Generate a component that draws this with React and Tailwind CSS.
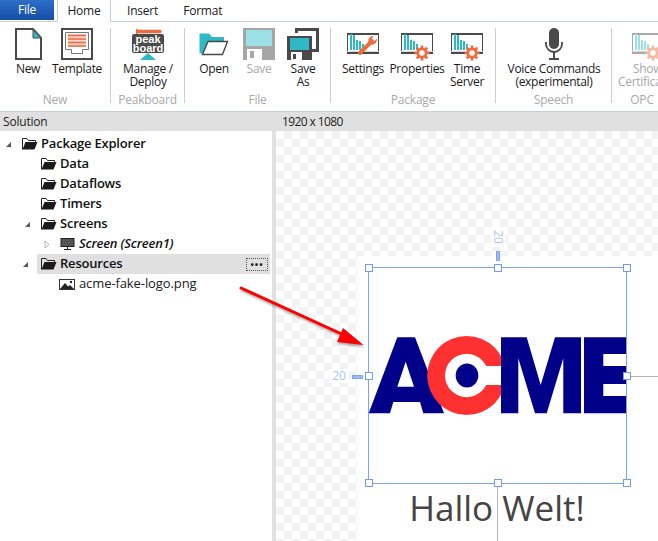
import { Fragment } from "react";

const D = "#4a4a4a";
const T = "#2fb9c4";
const O = "#ee6a3f";

function NewIcon() {
  return (
    <svg width="27" height="32" viewBox="0 0 27 32">
      <path d="M1 1H18L26 10V31H1Z" fill="#fff" stroke={D} strokeWidth="2" />
      <path d="M18 1.5L26 10H18Z" fill={T} stroke={D} strokeWidth="1" />
    </svg>
  );
}
function TemplateIcon() {
  return (
    <svg width="32" height="32" viewBox="0 0 32 32">
      <rect x="1" y="1" width="30" height="30" fill="#fff" stroke={D} strokeWidth="2" />
      <path d="M4.5 4.5H27.5V21.5H21.5V25.5H10.5V21.5H4.5Z" fill="#fff" stroke="#777" />
      <rect x="7" y="6" width="18" height="13" fill="#fcd9cc" />
      <path d="M7 7.5H25M7 11H25M7 14.5H25M7 18H25" stroke="#f0653c" strokeWidth="1.6" />
    </svg>
  );
}
function PeakboardIcon() {
  return (
    <svg width="32" height="32" viewBox="0 0 32 32">
      <path d="M6 3.5H28" stroke={O} strokeWidth="3.4" strokeLinecap="round" />
      <path d="M4 0.5L9 3.5L4 6.5Z" fill={O} />
      <rect x="0" y="6" width="32" height="19" rx="2" fill={D} />
      <text x="16" y="15" textAnchor="middle" fontSize="11" fontWeight="700" fill="#fff" fontFamily="'Liberation Sans',sans-serif">peak</text>
      <text x="16" y="23.5" textAnchor="middle" fontSize="11" fontWeight="700" fill="#fff" fontFamily="'Liberation Sans',sans-serif">board</text>
      <path d="M16 25L24 32H8Z" fill={T} />
    </svg>
  );
}
function OpenIcon() {
  return (
    <svg width="30" height="32" viewBox="0 0 30 32">
      <path d="M0.5 5.5V25.5H4L9 13H25V9H13L10 5.5Z" fill={T} />
      <path d="M9 13.5H28.5L23.5 26.5H3.5Z" fill="#fff" stroke={D} strokeWidth="1.4" />
    </svg>
  );
}
function SaveIcon() {
  return (
    <svg width="32" height="32" viewBox="0 0 32 32">
      <rect width="32" height="32" fill="#a6a6a6" />
      <rect x="3" y="2" width="26" height="16" fill="#9be1e7" />
      <rect x="4" y="21" width="15" height="11" fill="#fff" />
      <rect x="7" y="23" width="4" height="7" fill="#a6a6a6" />
    </svg>
  );
}
function SaveAsIcon() {
  return (
    <svg width="32" height="32" viewBox="0 0 32 32">
      <path d="M8 0H32V24H25V5H8Z" fill={D} />
      <path d="M11 3H29V21H25V5H11Z" fill="#fff" />
      <rect x="0" y="8" width="25" height="24" fill={D} />
      <rect x="3" y="10" width="19" height="12" fill={T} />
      <rect x="4" y="24" width="11" height="8" fill="#fff" />
      <rect x="6" y="26" width="3" height="5" fill={D} />
    </svg>
  );
}
function Gear({ x, y, color }) {
  const angles = [0, 45, 90, 135];
  return (
    <g>
      {angles.map((a) => (
        <path key={a} d={`M${x} ${y - 7.5}V${y + 7.5}`} stroke={color} strokeWidth="2.6" transform={`rotate(${a} ${x} ${y})`} />
      ))}
      <circle cx={x} cy={y} r="4.2" fill="#fff" stroke={color} strokeWidth="2.8" />
    </g>
  );
}
function Chart({ tool, dim }) {
  const bars = [[4, 16], [7, 15], [10, 10], [13, 9], [16, 6]];
  const frame = dim ? "#a9a9a9" : D;
  const teal = dim ? "#9be1e7" : T;
  const orange = dim ? "#f8b9a4" : O;
  return (
    <svg width="32" height="32" viewBox="0 0 32 32" className="overflow-visible">
      <rect x="0.5" y="5.5" width="31" height="20" fill="#fff" stroke={frame} />
      <path d="M0 6H32M0 25H32" stroke={frame} strokeWidth="2" />
      <path d="M0 23.5H32" stroke="#d8d8d8" />
      {bars.map(([x, h]) => (
        <path key={x} d={`M${x} 22V${22 - h}`} stroke={teal} strokeWidth="2" />
      ))}
      {tool ? (
        <g>
          <path d="M13 25L25 13" stroke={orange} strokeWidth="4" strokeLinecap="round" />
          <path d="M30 10.5A5.5 5.5 0 0 1 22 16A5.5 5.5 0 0 1 25 8L26.5 8L24.5 11L27 13.5Z" fill={orange} />
        </g>
      ) : (
        <Gear x={21} y={25} color={orange} />
      )}
    </svg>
  );
}
function MicIcon() {
  return (
    <svg width="18" height="32" viewBox="0 0 18 32">
      <rect x="4" y="0" width="10" height="21" rx="5" fill={D} />
      <path d="M1 14V16A8 8 0 0 0 17 16V14" fill="none" stroke={D} strokeWidth="1.8" />
      <path d="M9 24V31M4 31H14" stroke={D} strokeWidth="2" />
    </svg>
  );
}

function RibbonButton({ icon, lines, w, ml = "", dim }) {
  return (
    <div className={`flex flex-col items-center ${w} ${ml}`}>
      <div className="h-[34px] flex items-start justify-center">{icon}</div>
      <div className={`text-center leading-[13px] whitespace-nowrap tracking-[-0.3px] ${dim ? "text-[#a8a8a8]" : "text-[#1a1a1a]"}`}>
        {lines.map((l, i) => (
          <Fragment key={l}>
            {i > 0 && <br />}
            {l}
          </Fragment>
        ))}
      </div>
    </div>
  );
}
function Group({ label, w, children }) {
  return (
    <div className={`flex flex-col shrink-0 pt-[6px] ${w}`}>
      <div className="flex h-[64px]">{children}</div>
      <div className="text-center leading-[16px] text-[#a9a9a9] tracking-[-0.2px]">{label}</div>
    </div>
  );
}
function Sep() {
  return <div className="w-px h-[75px] mt-[6px] shrink-0 bg-[#c5d0de]" />;
}

function Folder() {
  return (
    <svg width="16" height="12" viewBox="0 0 16 12">
      <path d="M0.5 11.5V0.5H5L6.5 2.5H13.5V4" fill="none" stroke="#222" />
      <path d="M3.5 4H15.5L12.5 11.5H0.5Z" fill="#1a1a1a" />
    </svg>
  );
}
function Expanded() {
  return (
    <svg width="7" height="7" viewBox="0 0 7 7">
      <path d="M6 1V6H1Z" fill="#555" />
    </svg>
  );
}
function Collapsed() {
  return (
    <svg width="6" height="9" viewBox="0 0 6 9">
      <path d="M1 1L5 4.5L1 8Z" fill="#fff" stroke="#b5b5b5" />
    </svg>
  );
}
function Monitor() {
  return (
    <svg width="15" height="12" viewBox="0 0 15 12">
      <rect x="1" y="0.5" width="13" height="8" fill="#555" stroke="#222" />
      <path d="M7.5 9V11M4 11.5H11" stroke="#222" />
    </svg>
  );
}
function ImageIcon() {
  return (
    <svg width="16" height="11" viewBox="0 0 16 11">
      <rect x="0.5" y="0.5" width="15" height="10" fill="#fff" stroke="#333" />
      <path d="M1 10L6 4L9 7.5L11 6L15 10Z" fill="#222" />
      <circle cx="12" cy="3" r="1.2" fill="#222" />
    </svg>
  );
}

function TreeRow({ arrow, icon, label, arrowBox, iconBox, cls = "" }) {
  return (
    <div className="h-5 flex items-center">
      <div className={`flex items-center justify-center shrink-0 ${arrowBox}`}>{arrow}</div>
      <div className={`flex items-center shrink-0 ${iconBox}`}>{icon}</div>
      <span className={`text-[13px] whitespace-nowrap text-[#111] tracking-[-0.2px] ${cls}`}>{label}</span>
    </div>
  );
}

function Handle({ cls }) {
  return <div className={`absolute w-2 h-2 bg-white border border-[#6f9cf0] ${cls}`} />;
}

export default function App() {
  return (
    <div
      className="w-[658px] h-[541px] overflow-hidden bg-white flex flex-col text-xs text-[#1a1a1a]"
      style={{ fontFamily: "'Open Sans','Noto Sans',sans-serif" }}
    >
      {/* Tabs */}
      <div className="h-[22px] flex items-start border-b border-[#c5d0de] shrink-0 tracking-[-0.2px]">
        <div className="w-[54px] h-5 bg-gradient-to-b from-[#2e6fc9] to-[#154ea6] text-white flex items-center justify-center">File</div>
        <div className="ml-[3px] w-[54px] h-[22px] bg-white border-x border-[#c5d0de] flex items-center justify-center">Home</div>
        <div className="ml-[16px] h-[21px] flex items-center">Insert</div>
        <div className="ml-[25px] h-[21px] flex items-center">Format</div>
      </div>

      {/* Ribbon */}
      <div className="h-[89px] flex shrink-0 bg-white">
        <Group label="New" w="w-[110px]">
          <RibbonButton w="w-[38px]" ml="ml-[9px]" icon={<NewIcon />} lines={["New"]} />
          <RibbonButton w="w-[54px]" ml="ml-[3px]" icon={<TemplateIcon />} lines={["Template"]} />
        </Group>
        <Sep />
        <Group label="Peakboard" w="w-[73px]">
          <RibbonButton w="w-[73px]" ml="ml-[1px]" icon={<PeakboardIcon />} lines={["Manage /", "Deploy"]} />
        </Group>
        <Sep />
        <Group label="File" w="w-[145px]">
          <RibbonButton w="w-[44px]" ml="ml-[7px]" icon={<OpenIcon />} lines={["Open"]} />
          <RibbonButton w="w-[44px]" ml="ml-[1px]" dim icon={<SaveIcon />} lines={["Save"]} />
          <RibbonButton w="w-[42px]" ml="ml-[1px]" icon={<SaveAsIcon />} lines={["Save", "As"]} />
        </Group>
        <Sep />
        <Group label="Package" w="w-[164px]">
          <RibbonButton w="w-[52px]" ml="ml-[6px]" icon={<Chart tool />} lines={["Settings"]} />
          <RibbonButton w="w-[54px]" ml="ml-[1px]" icon={<Chart />} lines={["Properties"]} />
          <RibbonButton w="w-[44px]" ml="ml-[1px]" icon={<Chart />} lines={["Time", "Server"]} />
        </Group>
        <Sep />
        <Group label="Speech" w="w-[115px]">
          <RibbonButton w="w-[115px]" ml="ml-[1px]" icon={<MicIcon />} lines={["Voice Commands", "(experimental)"]} />
        </Group>
        <Sep />
        <Group label="OPC" w="w-[60px]">
          <RibbonButton w="w-[68px]" ml="ml-[6px]" dim icon={<Chart dim />} lines={["Show", "Certificates"]} />
        </Group>
      </div>

      {/* Panel headers */}
      <div className="h-5 flex items-center shrink-0 bg-[#e0e0e0] border-t border-[#c5d0de] text-[#222]">
        <div className="w-[282px] pl-[3px] tracking-[-0.2px]">Solution</div>
        <div className="tracking-[-0.6px]">1920 x 1080</div>
      </div>

      {/* Body */}
      <div className="flex-1 flex min-h-0">
        <div className="w-[272px] shrink-0 pt-[2px] pr-[2px] bg-white font-semibold">
          <div className="h-px" />
          <TreeRow arrow={<Expanded />} arrowBox="w-[17px]" iconBox="w-[19px] ml-[5px]" icon={<Folder />} label="Package Explorer" />
          <TreeRow arrowBox="w-[41px]" iconBox="w-[19px]" icon={<Folder />} label="Data" />
          <TreeRow arrowBox="w-[41px]" iconBox="w-[19px]" icon={<Folder />} label="Dataflows" />
          <TreeRow arrowBox="w-[41px]" iconBox="w-[19px]" icon={<Folder />} label="Timers" />
          <TreeRow arrow={<Expanded />} arrowBox="w-[41px] pl-[16px] pr-[3px]" iconBox="w-[19px]" icon={<Folder />} label="Screens" />
          <TreeRow arrow={<Collapsed />} arrowBox="w-[60px] pl-[36px] pr-[3px]" iconBox="w-[19px]" icon={<Monitor />} cls="italic" label="Screen (Screen1)" />
          <div className="h-5 flex items-center">
            <div className="w-[37px] shrink-0 flex justify-center pl-[14px]"><Expanded /></div>
            <div className="flex-1 h-5 flex items-center bg-[#e0e0e0]">
              <div className="w-[4px]" />
              <div className="w-[19px] flex items-center"><Folder /></div>
              <span className="text-[13px] text-[#111] tracking-[-0.2px]">Resources</span>
              <div className="ml-auto mr-[2px] w-[22px] h-[13px] border border-dotted border-[#555] flex items-center justify-center text-[9px] leading-none tracking-[1px] font-bold">•••</div>
            </div>
          </div>
          <div className="h-5 flex items-center">
            <div className="w-[59px] shrink-0" />
            <div className="w-[20px] flex items-center"><ImageIcon /></div>
            <span className="text-[13px] font-normal text-[#222] tracking-[-0.1px]">acme-fake-logo.png</span>
          </div>
        </div>
        <div className="w-1 shrink-0 bg-[#e0e0e0]" />

        {/* Free canvas */}
        <div className="relative flex-1 overflow-hidden bg-[repeating-conic-gradient(#f3f3f3_0_25%,#ffffff_0_50%)] bg-[size:16px_16px]">
          <div className="absolute left-[81px] top-[125px] right-0 bottom-0 bg-white" />
          <div className="absolute left-[221px] top-[352px] bottom-0 w-px bg-[#b5b5b5]" />
          <div className="absolute left-[351px] top-[245px] right-0 h-px bg-[#b5b5b5]" />

          <svg className="absolute left-[92px] top-[204px]" width="259" height="80" viewBox="368 335 259 80">
            <path d="M368.7 413.3L397.3 337.3H415L444 413.3H423.3L420 402H393.3L390 413.3ZM397.3 386.7H414L405.7 361.7Z" fill="#000088" fillRule="evenodd" />
            <circle cx="466.7" cy="375.5" r="39.5" fill="#ff3030" />
            <circle cx="466.7" cy="375.5" r="21.7" fill="#fff" />
            <rect x="467" y="366" width="36" height="19" fill="#fff" />
            <ellipse cx="467" cy="375.5" rx="11.3" ry="12" fill="#000088" />
            <path d="M501 337.3H526.7L540.7 385L555 337.3H581V413.3H563.3V358.3L546.7 413.3H535L518.3 358.3V413.3H501Z" fill="#000088" />
            <path d="M584 337.3H626V354H603.3V366H626V384H603.3V396H626V413.3H584Z" fill="#000088" />
          </svg>

          <div className="absolute left-[92px] top-[136px] w-[259px] h-[217px] border border-[#7ea4ef]" />
          <Handle cls="left-[89px] top-[133px]" />
          <Handle cls="left-[218px] top-[133px]" />
          <Handle cls="left-[347px] top-[133px]" />
          <Handle cls="left-[89px] top-[241px]" />
          <Handle cls="left-[347px] top-[241px]" />
          <Handle cls="left-[89px] top-[348px]" />
          <Handle cls="left-[218px] top-[348px]" />
          <Handle cls="left-[347px] top-[348px]" />

          <div className="absolute left-[220px] top-[120px] w-[4px] h-[10px] bg-[#9db8ef] border border-[#7ea4ef]" />
          <div className="absolute left-[76px] top-[244px] w-[11px] h-[4px] bg-[#9db8ef] border border-[#7ea4ef]" />
          <div className="absolute left-[212px] top-[99px] w-[20px] h-[14px] bg-white text-[#a9c3f3] flex items-center justify-center rotate-90 leading-none">20</div>
          <div className="absolute left-[53px] top-[238px] w-[20px] h-[14px] bg-white text-[#a9c3f3] flex items-center justify-center leading-none">20</div>

          <div className="absolute left-[221px] top-[352px] -translate-x-1/2 text-[35px] leading-[50px] whitespace-nowrap text-[#444]">Hallo Welt!</div>
        </div>
      </div>

      {/* Annotation arrow */}
      <svg className="absolute left-[235px] top-[280px] drop-shadow-[1px_2px_1px_rgba(0,0,0,0.35)]" width="135" height="72" viewBox="235 280 135 72">
        <path d="M241 288L346 336" stroke="#f00" strokeWidth="3" strokeLinecap="round" />
        <path d="M363.5 345L337 342L343 328Z" fill="#f00" />
      </svg>
    </div>
  );
}
